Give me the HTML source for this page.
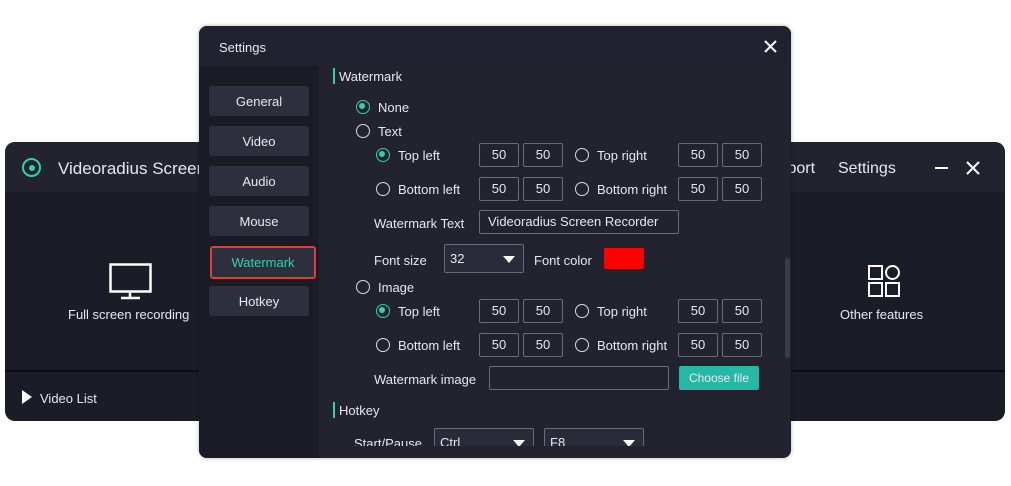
<!DOCTYPE html>
<html><head><style>
*{margin:0;padding:0;box-sizing:border-box}
body{width:1011px;height:486px;background:#fff;position:relative;overflow:hidden;font-family:"Liberation Sans",sans-serif;font-size:13px;color:#e8e8ec}
.a{position:absolute}
.main{left:5px;top:142px;width:1000px;height:279px;background:#1b1c27;border-radius:10px;overflow:hidden}
.mh{left:0;top:0;width:1000px;height:50px;background:#22232f}
.dlg{left:199px;top:26px;width:592px;height:432px;background:#22232f;border-radius:8px;overflow:hidden;box-shadow:0 0 4px rgba(0,0,0,.3)}
.side{left:0;top:40px;width:120px;height:392px;background:#1a1b25}
.btn{left:10px;width:100px;height:30px;background:#2e2f3d;border-radius:3px;text-align:center;line-height:32px;font-size:13px}
.in{border:1px solid #6b6c78;border-radius:2px;height:24px;line-height:22px;padding-left:8px;font-size:13px}
.n{width:40px;padding-left:0;text-align:center}
.r{width:14px;height:14px;border:1.6px solid #ddd;border-radius:50%}
.r.on{border-color:#2fd3a8}
.r.on::after{content:"";position:absolute;left:2.4px;top:2.4px;width:6px;height:6px;border-radius:50%;background:#2fd3a8}
.sel{background:#2a2b38;border:1px solid #6b6c78;border-radius:2px;padding-left:5px;font-size:13px}
.tri{position:absolute;right:8px;top:11px;width:0;height:0;border-left:6px solid transparent;border-right:6px solid transparent;border-top:7px solid #fff}
.bar{width:2px;height:16px;background:#2fd3a8}
</style></head><body>
<div class="a main">
 <div class="a mh"></div>
 <div class="a" style="left:17px;top:16px;width:19px;height:19px;border:2px solid #2fd3a8;border-radius:50%"><div class="a" style="left:4.5px;top:4.5px;width:6px;height:6px;border-radius:50%;background:#2fd3a8"></div></div>
 <div class="a" style="left:53px;top:17px;font-size:17px">Videoradius Screen Recorder</div>
 <div class="a" style="left:754px;top:18px;font-size:16px">Support</div>
 <div class="a" style="left:833px;top:18px;font-size:16px">Settings</div>
 <div class="a" style="left:930px;top:25px;width:13px;height:2px;background:#fff"></div>
 <svg class="a" style="left:961px;top:19px" width="14" height="14"><path d="M1 1L13 13M13 1L1 13" stroke="#fff" stroke-width="2"/></svg>
 <svg class="a" style="left:104px;top:121px" width="44" height="38"><rect x="1.5" y="1.5" width="40" height="27" fill="none" stroke="#fff" stroke-width="2.5"/><path d="M21 29v6M12 35h19" stroke="#fff" stroke-width="2.5"/></svg>
 <div class="a" style="left:63px;top:165px;font-size:13px">Full screen recording</div>
 <svg class="a" style="left:862px;top:122px" width="36" height="34" fill="none" stroke="#fff" stroke-width="2"><rect x="2" y="2" width="13" height="13"/><circle cx="25.5" cy="8.5" r="6.5"/><rect x="2" y="19" width="13" height="13"/><rect x="19" y="19" width="13" height="13"/></svg>
 <div class="a" style="left:835px;top:165px">Other features</div>
 <div class="a" style="left:0;top:228px;width:1000px;height:2px;background:#0c0c12"></div>
 <div class="a" style="left:17px;top:248px;width:0;height:0;border-top:7px solid transparent;border-bottom:7px solid transparent;border-left:10px solid #fff"></div>
 <div class="a" style="left:35px;top:249px">Video List</div>
</div>
<div class="a dlg">
 <div class="a" style="left:0;top:0;width:592px;height:40px;background:#212230"></div>
 <div class="a" style="left:20px;top:14px">Settings</div>
 <svg class="a" style="left:565px;top:14px" width="13" height="13"><path d="M1 1L12 12M12 1L1 12" stroke="#fff" stroke-width="2"/></svg>
 <div class="a side">
  <div class="a btn" style="top:20px">General</div>
  <div class="a btn" style="top:60px">Video</div>
  <div class="a btn" style="top:100px">Audio</div>
  <div class="a btn" style="top:140px">Mouse</div>
  <div class="a btn" style="top:180px;color:#2fd3a8;border:2px solid #e53a3a;width:106px;left:11px;height:33px;line-height:29px">Watermark</div>
  <div class="a btn" style="top:220px">Hotkey</div>
 </div>
 <div class="a" style="left:586px;top:232px;width:5px;height:100px;background:#3a3b47;border-radius:3px"></div>
 <div class="a" style="left:120px;top:40px;width:466px;height:380px;overflow:hidden">
  <div class="a bar" style="left:14px;top:2px"></div>
  <div class="a" style="left:20px;top:3px">Watermark</div>
  <div class="a r on" style="left:37px;top:34px"></div><div class="a" style="left:59px;top:34px">None</div>
  <div class="a r" style="left:37px;top:58px"></div><div class="a" style="left:59px;top:58px">Text</div>
  <div class="a r on" style="left:57px;top:82px"></div><div class="a" style="left:79px;top:82px">Top left</div>
  <div class="a in n" style="left:160px;top:77px">50</div><div class="a in n" style="left:204px;top:77px">50</div>
  <div class="a r" style="left:256px;top:82px"></div><div class="a" style="left:278px;top:82px">Top right</div>
  <div class="a in n" style="left:359px;top:77px">50</div><div class="a in n" style="left:403px;top:77px">50</div>
  <div class="a r" style="left:57px;top:116px"></div><div class="a" style="left:79px;top:116px">Bottom left</div>
  <div class="a in n" style="left:160px;top:111px">50</div><div class="a in n" style="left:204px;top:111px">50</div>
  <div class="a r" style="left:256px;top:116px"></div><div class="a" style="left:278px;top:116px">Bottom right</div>
  <div class="a in n" style="left:359px;top:111px">50</div><div class="a in n" style="left:403px;top:111px">50</div>
  <div class="a" style="left:55px;top:150px">Watermark Text</div>
  <div class="a in" style="left:160px;top:144px;width:200px">Videoradius Screen Recorder</div>
  <div class="a" style="left:55px;top:187px">Font size</div>
  <div class="a sel" style="left:125px;top:178px;width:80px;height:29px;line-height:27px">32<span class="tri"></span></div>
  <div class="a" style="left:215px;top:187px">Font color</div>
  <div class="a" style="left:285px;top:182px;width:40px;height:21px;background:#f00;border-radius:2px"></div>
  <div class="a r" style="left:37px;top:214px"></div><div class="a" style="left:59px;top:214px">Image</div>
  <div class="a r on" style="left:57px;top:238px"></div><div class="a" style="left:79px;top:238px">Top left</div>
  <div class="a in n" style="left:160px;top:233px">50</div><div class="a in n" style="left:204px;top:233px">50</div>
  <div class="a r" style="left:256px;top:238px"></div><div class="a" style="left:278px;top:238px">Top right</div>
  <div class="a in n" style="left:359px;top:233px">50</div><div class="a in n" style="left:403px;top:233px">50</div>
  <div class="a r" style="left:57px;top:272px"></div><div class="a" style="left:79px;top:272px">Bottom left</div>
  <div class="a in n" style="left:160px;top:267px">50</div><div class="a in n" style="left:204px;top:267px">50</div>
  <div class="a r" style="left:256px;top:272px"></div><div class="a" style="left:278px;top:272px">Bottom right</div>
  <div class="a in n" style="left:359px;top:267px">50</div><div class="a in n" style="left:403px;top:267px">50</div>
  <div class="a" style="left:55px;top:306px">Watermark image</div>
  <div class="a in" style="left:170px;top:300px;width:180px"></div>
  <div class="a" style="left:360px;top:300px;width:80px;height:24px;background:#26b8a6;border-radius:2px;text-align:center;line-height:24px;font-size:12px">Choose file</div>
  <div class="a bar" style="left:14px;top:336px"></div>
  <div class="a" style="left:20px;top:337px">Hotkey</div>
  <div class="a" style="left:35px;top:370px">Start/Pause</div>
  <div class="a sel" style="left:115px;top:362px;width:100px;height:30px;line-height:28px">Ctrl<span class="tri"></span></div>
  <div class="a sel" style="left:225px;top:362px;width:100px;height:30px;line-height:28px">F8<span class="tri"></span></div>
 </div>
</div>
</body></html>
